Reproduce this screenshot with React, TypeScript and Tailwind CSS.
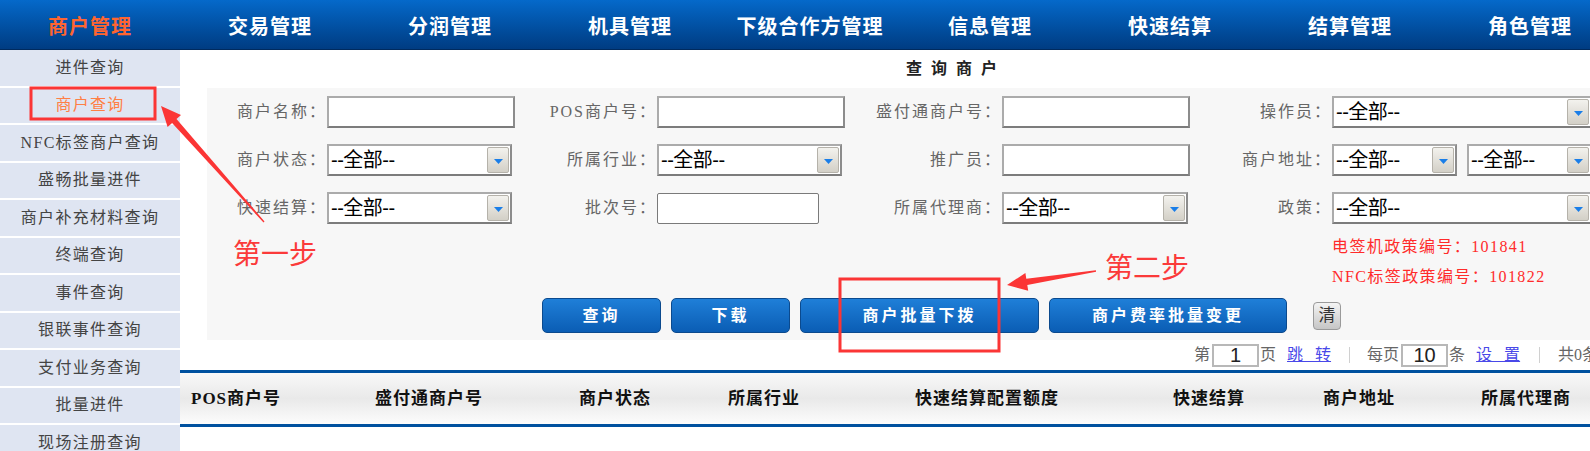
const navItems = ['商户管理', '交易管理', '分润管理', '机具管理', '下级合作方管理', '信息管理', '快速结算', '结算管理', '角色管理'];

const sideItems = [
  '进件查询',
  '商户查询',
  'NFC标签商户查询',
  '盛畅批量进件',
  '商户补充材料查询',
  '终端查询',
  '事件查询',
  '银联事件查询',
  '支付业务查询',
  '批量进件',
  '现场注册查询',
];

const headCols: { text: string; w: string }[] = [
  { text: 'POS商户号', w: 'w-[184px]' },
  { text: '盛付通商户号', w: 'w-[204px]' },
  { text: '商户状态', w: 'w-[149px]' },
  { text: '所属行业', w: 'w-[187px]' },
  { text: '快速结算配置额度', w: 'w-[258px]' },
  { text: '快速结算', w: 'w-[150px]' },
  { text: '商户地址', w: 'w-[158px]' },
  { text: '所属代理商', w: 'w-[160px]' },
];

function Label({ text, w }: { text: string; w: string }) {
  return <div className={`${w} shrink-0 text-right text-[16px] tracking-[2px] text-[#666]`}>{text}</div>;
}

function TextBox({ w = 'w-[188px]' }: { w?: string }) {
  return (
    <div
      className={`h-[32px] ${w} shrink-0 border-2 border-[#ababab] border-r-[#8c8c8c] border-b-[#7c7c7c] bg-white`}
    />
  );
}

function Select({ w }: { w: string }) {
  return (
    <div
      className={`flex h-[32px] ${w} shrink-0 items-center border-2 border-[#ababab] border-r-[#8c8c8c] border-b-[#7c7c7c] bg-white pl-[2px] pr-[1px]`}
    >
      <span className="font-['Liberation_Sans','Noto_Sans_CJK_SC',sans-serif] text-[20px] leading-none tracking-[-0.5px] text-black">
        --全部--
      </span>
      {/* dropdown button */}
      <div className="ml-auto flex h-[26px] w-[22px] shrink-0 items-center justify-center rounded-[2px] border border-[#b5b2aa] bg-gradient-to-b from-[#f3f2ee] to-[#d3d0c7] pt-[2px]">
        <svg width="9" height="5" viewBox="0 0 9 5">
          <path d="M0 0H9L4.5 5Z" fill="#1a7ee8" />
        </svg>
      </div>
    </div>
  );
}

function BlueButton({ text, w }: { text: string; w: string }) {
  return (
    <div
      className={`flex h-[35px] ${w} shrink-0 items-center justify-center rounded-[5px] border border-[#0b4a8e] bg-gradient-to-b from-[#1f7fd8] to-[#0a5db4] text-[16px] font-bold tracking-[3px] text-white`}
    >
      {text}
    </div>
  );
}

export default function App() {
  return (
    <div className="relative h-[451px] w-[1590px] overflow-hidden bg-white font-['Liberation_Serif','Noto_Sans_CJK_SC',serif]">
      {/* Top navigation */}
      <div className="flex h-[50px] border-b border-[#002a5e] bg-gradient-to-b from-[#0569ca] to-[#003c82]">
        {navItems.map((item, i) => (
          <div
            key={item}
            className={`flex w-[180px] shrink-0 items-center justify-center pt-[5px] text-[20px] font-bold tracking-[1px] ${
              i === 0 ? 'text-[#ff6530]' : 'text-white'
            }`}
          >
            {item}
          </div>
        ))}
      </div>

      <div className="flex">
        {/* Sidebar */}
        <div className="w-[180px] shrink-0">
          {sideItems.map((item, i) => (
            <div
              key={item}
              className={`mb-[2px] flex h-[35.5px] items-center justify-center bg-[#dfe5f2] text-[16px] tracking-[1.3px] ${
                i === 1 ? 'text-[#ff7f45]' : 'text-[#444]'
              }`}
            >
              {item}
            </div>
          ))}
        </div>

        {/* Main */}
        <div className="min-w-0 flex-1">
          <div className="flex h-[38px] items-center pl-[726px] text-[16px] font-bold tracking-[9px] text-[#222]">
            查询商户
          </div>

          {/* Search form */}
          <div className="ml-[27px] h-[252px] bg-[#f7f7f7]">
            <div className="flex h-[48px] items-center">
              <Label text="商户名称：" w="w-[120px]" />
              <div className="w-[222px] shrink-0">
                <TextBox />
              </div>
              <Label text="POS商户号：" w="w-[108px]" />
              <div className="w-[213px] shrink-0">
                <TextBox />
              </div>
              <Label text="盛付通商户号：" w="w-[132px]" />
              <div className="w-[239px] shrink-0">
                <TextBox />
              </div>
              <Label text="操作员：" w="w-[91px]" />
              <Select w="w-[260px]" />
            </div>

            <div className="flex h-[48px] items-center">
              <Label text="商户状态：" w="w-[120px]" />
              <div className="w-[222px] shrink-0">
                <Select w="w-[185px]" />
              </div>
              <Label text="所属行业：" w="w-[108px]" />
              <div className="w-[213px] shrink-0">
                <Select w="w-[185px]" />
              </div>
              <Label text="推广员：" w="w-[132px]" />
              <div className="w-[239px] shrink-0">
                <TextBox />
              </div>
              <Label text="商户地址：" w="w-[91px]" />
              <div className="flex shrink-0 gap-[10px]">
                <Select w="w-[125px]" />
                <Select w="w-[125px]" />
              </div>
            </div>

            <div className="flex h-[48px] items-center">
              <Label text="快速结算：" w="w-[120px]" />
              <div className="w-[222px] shrink-0">
                <Select w="w-[185px]" />
              </div>
              <Label text="批次号：" w="w-[108px]" />
              <div className="w-[213px] shrink-0">
                <div className="h-[31px] w-[162px] rounded-[2px] border border-[#7a7a7a] bg-white" />
              </div>
              <Label text="所属代理商：" w="w-[132px]" />
              <div className="w-[239px] shrink-0">
                <Select w="w-[186px]" />
              </div>
              <Label text="政策：" w="w-[91px]" />
              <Select w="w-[260px]" />
            </div>

            <div className="pl-[1125px] text-[16px] tracking-[1.4px] text-[#ff2b2b]">
              <div className="flex h-[30px] items-center whitespace-nowrap">电签机政策编号：101841</div>
              <div className="flex h-[30px] items-center whitespace-nowrap">NFC标签政策编号：101822</div>
            </div>

            <div className="mt-[6px] flex items-center gap-[10px] pl-[335px]">
              <BlueButton text="查询" w="w-[119px]" />
              <BlueButton text="下载" w="w-[119px]" />
              <BlueButton text="商户批量下拨" w="w-[239px]" />
              <BlueButton text="商户费率批量变更" w="w-[238px]" />
              <div className="ml-[16px] flex h-[28px] w-[28px] shrink-0 items-center justify-center rounded-[4px] border border-[#9a9a9a] bg-gradient-to-b from-[#f4f4f4] to-[#c6c6c6] text-[17px] text-[#333]">
                清
              </div>
            </div>
          </div>

          {/* Pagination */}
          <div className="flex h-[30px] items-center whitespace-nowrap pl-[1014px] text-[16px] text-[#666]">
            <span className="shrink-0">第</span>
            <div className="ml-[2px] flex h-[23px] w-[47px] shrink-0 items-center justify-center border-2 border-[#b8b8b8] font-['Liberation_Sans',sans-serif] text-[20px] text-[#222]">
              1
            </div>
            <span className="ml-[1px] shrink-0">页</span>
            <span className="ml-[11px] shrink-0 text-[#4848e8] underline">跳&nbsp;&nbsp;&nbsp;转</span>
            <div className="ml-[18px] h-[16px] w-[1px] shrink-0 bg-[#d0d0d0]" />
            <span className="ml-[17px] shrink-0">每页</span>
            <div className="ml-[2px] flex h-[23px] w-[47px] shrink-0 items-center justify-center border-2 border-[#b8b8b8] font-['Liberation_Sans',sans-serif] text-[20px] text-[#222]">
              10
            </div>
            <span className="ml-[1px] shrink-0">条</span>
            <span className="ml-[11px] shrink-0 text-[#4848e8] underline">设&nbsp;&nbsp;&nbsp;置</span>
            <div className="ml-[19px] h-[16px] w-[1px] shrink-0 bg-[#d0d0d0]" />
            <span className="ml-[18px] shrink-0">共0条记录</span>
          </div>

          {/* Table header */}
          <div className="flex h-[57px] items-center whitespace-nowrap border-y-[3px] border-[#00519f] bg-gradient-to-b from-[#f8f8f8] via-[#e9e9e9] to-[#fcfcfc] pl-[11px] text-[17px] font-bold tracking-[1px] text-[#111]">
            {headCols.map((c) => (
              <div key={c.text} className={`${c.w} shrink-0`}>
                {c.text}
              </div>
            ))}
          </div>
        </div>
      </div>

      {/* Annotation overlay */}
      <svg className="pointer-events-none absolute left-0 top-0" width="1590" height="451">
        <rect x="31" y="88" width="124" height="31" fill="none" stroke="#fb3535" strokeWidth="3" />
        <rect x="840" y="279" width="159" height="72" fill="none" stroke="#fb3535" strokeWidth="3" />
        <polygon
          points="161,106 181,115 176.5,119 264.5,221.5 263.5,222.5 172.1,123 167.6,127"
          fill="#fb3535"
        />
        <polygon
          points="1007,285 1025.4,273 1026.3,278.7 1095.9,270.3 1096.1,271.7 1027.3,285.1 1028.2,290.8"
          fill="#fb3535"
        />
      </svg>
      <div className="absolute left-[233px] top-[238px] font-['Noto_Sans_CJK_SC',sans-serif] text-[28px] leading-[28px] text-[#fb3a3a]">
        第一步
      </div>
      <div className="absolute left-[1105px] top-[252px] font-['Noto_Sans_CJK_SC',sans-serif] text-[28px] leading-[28px] text-[#fb3a3a]">
        第二步
      </div>
    </div>
  );
}
